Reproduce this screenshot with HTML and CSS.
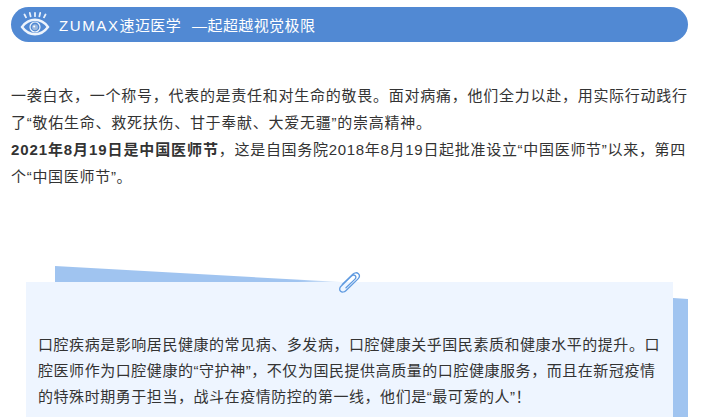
FILE: index.html
```html
<!DOCTYPE html>
<html lang="zh-CN">
<head>
<meta charset="utf-8">
<title>ZUMAX</title>
<link rel="stylesheet" href="styles.css">
</head>
<body>
<header class="banner">
  <svg class="eye" width="30" height="26" viewBox="0 0 30 26" fill="none">
    <g stroke="#e8f0fb" stroke-width="1.8" stroke-linecap="round">
      <path d="M4.500 2.500l1.500 2.800M9.800 1l.8 3.400M15 1v3.200M20.200 1l-.8 3.400M25.500 2.500L24 5.300"/>
    </g>
    <path d="M2 15C6 9.500 10.500 7.800 15 7.800S24 9.500 28 15C24 20.500 19.500 22.200 15 22.200S6 20.500 2 15Z" stroke="#eef4fc" stroke-width="2.400"/>
    <circle cx="15" cy="15" r="5" stroke="#eef4fc" stroke-width="1.200"/>
    <circle cx="15" cy="15.300" r="3" fill="#9db9df"/>
    <circle cx="14.200" cy="14.400" r="1" fill="#fff"/>
  </svg>
  <span class="brand"><span class="brand-name">ZUMAX</span>速迈医学</span>
  <span class="slogan">—起超越视觉极限</span>
</header>
<main class="intro">
  <p>一袭白衣，一个称号，代表的是责任和对生命的敬畏。面对病痛，他们全力以赴，用实际行动践行了“敬佑生命、救死扶伤、甘于奉献、大爱无疆”的崇高精神。</p>
  <p class="intro-date"><strong>2021年8月19日是中国医师节</strong>，这是自国务院2018年8月19日起批准设立“中国医师节”以来，第四个“中国医师节”。</p>
</main>
<section class="note">
  <svg class="sheet" width="633" height="151" viewBox="0 0 633 151" preserveAspectRatio="none">
    <defs>
      <linearGradient id="tip" x1="0.850" y1="0" x2="1" y2="0">
        <stop offset="0" stop-color="#a0c4f0"/>
        <stop offset="1" stop-color="#e2edfb"/>
      </linearGradient>
    </defs>
    <polygon points="0,0 286,16 0,16" fill="url(#tip)"/>
    <polygon points="618,32 633,33 633,151 618,151" fill="#a0c4f0"/>
  </svg>
  <svg class="clip" width="24" height="24" viewBox="0 0 24 24" fill="none">
    <path d="M5.200 14.500L15.800 4.200C17.500 2.500 20 2.300 21.400 3.700C22.800 5.100 22.500 7.400 20.800 9.100L8.800 20.700C7.400 22.100 5 22.500 3.600 21.200C2.200 19.900 2.500 17.700 4 16.300L14.800 5.900C15.800 4.900 17.400 4.800 18.300 5.700C19.200 6.600 19 8.100 18 9.100L9 17.800" stroke="#5f9ae0" stroke-width="1.300" stroke-linecap="round" stroke-linejoin="round"/>
  </svg>
  <p class="note-text">口腔疾病是影响居民健康的常见病、多发病，口腔健康关乎国民素质和健康水平的提升。口腔医师作为口腔健康的“守护神”，不仅为国民提供高质量的口腔健康服务，而且在新冠疫情的特殊时期勇于担当，战斗在疫情防控的第一线，他们是“最可爱的人”！</p>
</section>
</body>
</html>
```

FILE: styles.css
```css
html, body {
  margin: 0;
  padding: 0;
  background: #fff;
  overflow: hidden;
}
body {
  width: 708px;
  height: 417px;
  padding: 7px 20px 0 11px;
  box-sizing: border-box;
  font-family: "Liberation Sans", "Noto Sans CJK SC", sans-serif;
  color: #333;
}
.banner {
  display: flex;
  align-items: center;
  height: 35px;
  border-radius: 18px;
  background: #5189d3;
  color: #fff;
  font-size: 15px;
  letter-spacing: 0.400px;
  padding-left: 9px;
  box-sizing: border-box;
}
.eye {
  flex: none;
  margin-right: 9px;
}
.brand {
  margin-right: 11px;
}
.brand-name {
  letter-spacing: 1.600px;
}
.intro {
  margin-top: 40px;
  font-size: 15px;
  line-height: 27px;
  letter-spacing: 0.740px;
}
.intro p {
  margin: 0;
}
.intro .intro-date {
  letter-spacing: 0.700px;
}
.intro strong {
  font-weight: 700;
  letter-spacing: 0.900px;
}
.note {
  position: relative;
  z-index: 0;
  margin: 92px 15px 0;
  height: 135px;
  background: #eef5ff;
  padding: 50px 12px 0;
  box-sizing: border-box;
}
.sheet {
  position: absolute;
  left: 29px;
  top: -16px;
  z-index: -1;
  overflow: visible;
}
.clip {
  position: absolute;
  left: 311px;
  top: -12px;
}
.note-text {
  margin: 0;
  font-size: 15px;
  line-height: 26px;
  letter-spacing: 0.550px;
  color: #333;
}
```
